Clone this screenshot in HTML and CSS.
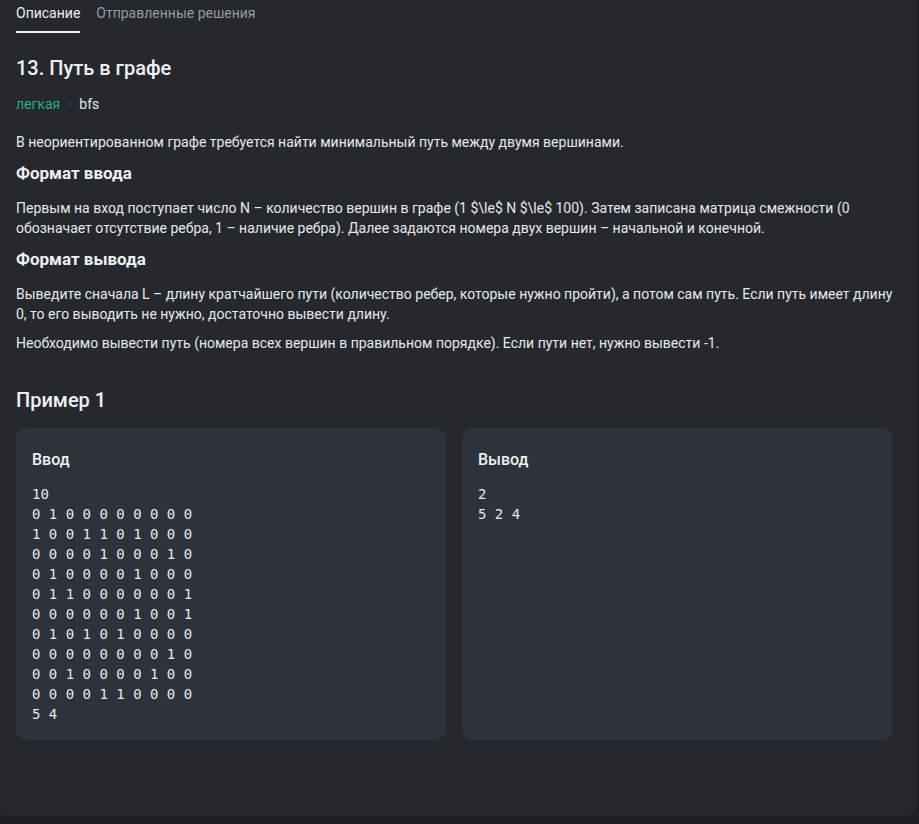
FILE: index.html
```html
<!DOCTYPE html>
<html lang="ru">
<head>
<meta charset="utf-8">
<link rel="stylesheet" href="styles.css">
</head>
<body>
<div class="panel">
  <nav class="tabs">
    <span class="tab active">Описание</span>
    <span class="tab">Отправленные решения</span>
  </nav>
  <h1 class="title">13. Путь в графе</h1>
  <div class="meta"><span class="level">легкая</span><span class="dot">•</span><span class="tag">bfs</span></div>
  <p class="text">В неориентированном графе требуется найти минимальный путь между двумя вершинами.</p>
  <h2 class="sub">Формат ввода</h2>
  <p class="text">Первым на вход поступает число N – количество вершин в графе (1 $\le$ N $\le$ 100). Затем записана матрица смежности (0 обозначает отсутствие ребра, 1 – наличие ребра). Далее задаются номера двух вершин – начальной и конечной.</p>
  <h2 class="sub">Формат вывода</h2>
  <p class="text">Выведите сначала L – длину кратчайшего пути (количество ребер, которые нужно пройти), а потом сам путь. Если путь имеет длину 0, то его выводить не нужно, достаточно вывести длину.</p>
  <p class="text">Необходимо вывести путь (номера всех вершин в правильном порядке). Если пути нет, нужно вывести -1.</p>
  <h2 class="example">Пример 1</h2>
  <div class="cards">
    <div class="card">
      <h3 class="card-title">Ввод</h3>
      <pre class="code">10
0 1 0 0 0 0 0 0 0 0
1 0 0 1 1 0 1 0 0 0
0 0 0 0 1 0 0 0 1 0
0 1 0 0 0 0 1 0 0 0
0 1 1 0 0 0 0 0 0 1
0 0 0 0 0 0 1 0 0 1
0 1 0 1 0 1 0 0 0 0
0 0 0 0 0 0 0 0 1 0
0 0 1 0 0 0 0 1 0 0
0 0 0 0 1 1 0 0 0 0
5 4</pre>
    </div>
    <div class="card">
      <h3 class="card-title">Вывод</h3>
      <pre class="code">2
5 2 4</pre>
    </div>
  </div>
</div>
</body>
</html>
```
FILE: styles.css
```css
* { box-sizing: border-box; }
html, body { margin: 0; padding: 0; }
body {
  background: #1e2124;
  font-family: Roboto, "Noto Sans", sans-serif;
  color: #e6e8ea;
  height: 824px;
  overflow: hidden;
}
.panel {
  width: 916px;
  height: 816px;
  background: #25292e;
  border-radius: 0 0 12px 6px;
  padding: 0 16px;
}
.tabs {
  display: flex;
  gap: 16px;
  height: 33px;
  align-items: flex-start;
  padding-top: 3px;
}
.tab {
  font-size: 14px;
  line-height: 20px;
  color: #969ba1;
  padding-bottom: 8px;
}
.tab.active {
  color: #eef0f2;
  border-bottom: 2px solid #eef0f2;
}
.title {
  margin: 21px 0 0;
  font-size: 20px;
  line-height: 28px;
  font-weight: 500;
  color: #eef0f2;
}
.meta {
  margin-top: 12px;
  font-size: 14px;
  line-height: 20px;
  display: flex;
  align-items: center;
}
.level { color: #2fa886; }
.dot { color: #5a6068; font-size: 9px; margin: 0 8px; }
.tag { color: #e6e8ea; }
.text {
  margin: 18px 0 0;
  font-size: 14px;
  line-height: 20px;
}
.sub + .text { margin-top: 13px; }
.text + .text { margin-top: 9px; }
.sub {
  margin: 9px 0 0;
  font-size: 17px;
  line-height: 24px;
  font-weight: 700;
  color: #eef0f2;
}
.example {
  margin: 33px 0 0;
  font-size: 20px;
  line-height: 28px;
  font-weight: 500;
  color: #eef0f2;
}
.cards {
  margin-top: 14px;
  display: grid;
  grid-template-columns: 430px 430px;
  gap: 16px;
}
.card {
  background: #2e323a;
  border-radius: 10px;
  padding: 20px 16px 14px;
  height: 312px;
}
.card-title {
  margin: 0;
  font-size: 16px;
  line-height: 24px;
  font-weight: 500;
  color: #eef0f2;
}
.code {
  margin: 12px 0 0;
  font-family: "DejaVu Sans Mono", monospace;
  font-size: 14px;
  line-height: 20px;
  color: #e6e8ea;
}
```
